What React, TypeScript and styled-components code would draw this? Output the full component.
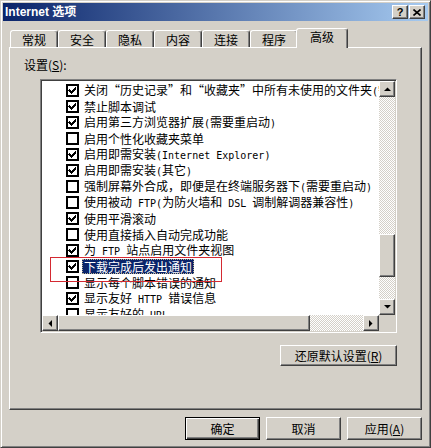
import React from 'react';
import styled, { createGlobalStyle, css } from 'styled-components';

const GlobalStyle = createGlobalStyle`
  html, body {
    margin: 0;
    padding: 0;
    background: #d4d0c8;
  }
  body {
    font-family: "Noto Sans CJK SC", "Liberation Sans", sans-serif;
    font-size: 12px;
    color: #000;
  }
  * {
    box-sizing: border-box;
  }
`;

const raised = css`
  background: #d4d0c8;
  border: 1px solid;
  border-color: #fff #404040 #404040 #fff;
  box-shadow: inset -1px -1px #808080;
`;

const Window = styled.div`
  width: 431px;
  height: 448px;
  background: #d4d0c8;
  border: 1px solid;
  border-color: #d4d0c8 #404040 #404040 #d4d0c8;
  box-shadow: inset 1px 1px #fff, inset -1px -1px #808080;
  padding: 2px;
  display: flex;
  flex-direction: column;
`;

const TitleBar = styled.div`
  height: 18px;
  display: flex;
  align-items: center;
  padding: 0 3px 0 2px;
  background: linear-gradient(to right, #0a246a, #a6caf0);
  color: #fff;
`;

const Title = styled.div`
  flex: 1;
  font: bold 12px "Liberation Sans", "Noto Sans CJK SC", sans-serif;
  line-height: 18px;
  white-space: nowrap;
`;

const CaptionButtons = styled.div`
  display: flex;
  gap: 1px;
`;

const CaptionButton = styled.div`
  ${raised}
  width: 16px;
  height: 14px;
  display: flex;
  align-items: center;
  justify-content: center;
  color: #000;
  font: bold 11px "Liberation Sans", sans-serif;
  line-height: 12px;
`;

const TabStrip = styled.div`
  display: flex;
  align-items: flex-end;
  height: 19px;
  margin: 7px 6px 0;
  padding-left: 1px;
`;

const Tab = styled.div<{ $active?: boolean }>`
  width: 48px;
  height: 17px;
  border: 1px solid;
  border-bottom: none;
  border-color: #fff #404040 transparent #fff;
  box-shadow: inset -1px 0 #808080;
  border-radius: 3px 3px 0 0;
  background: #d4d0c8;
  text-align: center;
  padding-top: 2px;
  line-height: 14px;
  white-space: nowrap;

  ${(p) =>
    p.$active &&
    css`
      width: 52px;
      height: 20px;
      margin: 0 -2px -1px;
      padding-top: 1px;
      position: relative;
      z-index: 1;
    `}
`;

const Panel = styled.div`
  height: 363px;
  margin: 0 6px;
  border: 1px solid;
  border-color: #fff #404040 #404040 #fff;
  box-shadow: inset -1px -1px #808080;
  padding: 9px 0 0 14px;
  display: flex;
  flex-direction: column;
`;

const FieldLabel = styled.div`
  line-height: 16px;
  height: 16px;
`;

const Section = styled.div`
  width: 357px;
  margin: 6px 0 0 16px;
  display: flex;
  flex-direction: column;
`;

const ListFrame = styled.div`
  height: 254px;
  border: 1px solid;
  border-color: #808080 #fff #fff #808080;
  box-shadow: inset 1px 1px #404040, inset -1px -1px #d4d0c8;
  padding: 1px;
  background: #fff;
  display: grid;
  grid-template-columns: 1fr 16px;
  grid-template-rows: 1fr 16px;
`;

const Viewport = styled.div`
  position: relative;
  overflow: hidden;
  padding-top: 1px;
`;

const Row = styled.div`
  height: 16px;
  display: flex;
  align-items: center;
  padding-left: 24px;
  white-space: nowrap;
`;

const ItemLabel = styled.span<{ $selected?: boolean }>`
  margin-left: 3px;
  padding: 0 1px;
  border: 1px solid transparent;
  line-height: 13px;
  font-feature-settings: "fwid" 1;
  ${(p) =>
    p.$selected &&
    css`
      background: #0a246a;
      color: #fff;
      border: 1px dotted #b8b090;
    `}
`;

const Latin = styled.span`
  font-family: "DejaVu Sans Mono", "Liberation Mono", monospace;
  font-size: 10px;
  font-feature-settings: normal;
  white-space: pre;
`;

const Annotation = styled.div`
  position: absolute;
  left: 8px;
  top: 176px;
  width: 172px;
  height: 25px;
  border: 1px solid #d42a32;
  pointer-events: none;
`;

const hatch = css`
  background: repeating-conic-gradient(#fff 0 25%, #d4d0c8 0 50%) 0 0 / 2px 2px;
`;

const VScroll = styled.div`
  display: flex;
  flex-direction: column;
`;

const HScroll = styled.div`
  display: flex;
`;

const Track = styled.div`
  flex: 1;
  display: flex;
  ${hatch}
`;

const VTrack = styled(Track)`
  flex-direction: column;
`;

const ScrollButton = styled.div`
  ${raised}
  width: 16px;
  height: 16px;
  flex: none;
  display: flex;
  align-items: center;
  justify-content: center;
`;

const VThumb = styled.div<{ $offset: number; $size: number }>`
  ${raised}
  margin-top: ${(p) => p.$offset}px;
  height: ${(p) => p.$size}px;
  width: 16px;
`;

const HThumb = styled.div<{ $offset: number; $size: number }>`
  ${raised}
  margin-left: ${(p) => p.$offset}px;
  width: ${(p) => p.$size}px;
  height: 16px;
`;

const Corner = styled.div`
  background: #d4d0c8;
`;

const ButtonLine = styled.div<{ $gap?: number }>`
  display: flex;
  justify-content: flex-end;
  gap: ${(p) => p.$gap ?? 0}px;
`;

const RestoreLine = styled(ButtonLine)`
  margin-top: 12px;
`;

const DialogButtons = styled(ButtonLine)`
  margin-top: 7px;
  padding-right: 6px;
`;

const PushButton = styled.div<{ $width: number; $height: number; $default?: boolean }>`
  ${raised}
  width: ${(p) => p.$width}px;
  height: ${(p) => p.$height}px;
  display: flex;
  align-items: center;
  justify-content: center;
  line-height: 14px;
  white-space: nowrap;
  ${(p) =>
    p.$default &&
    css`
      border: 1px solid #000;
      box-shadow: inset 1px 1px #fff, inset -1px -1px #404040, inset -2px -2px #808080;
    `}
`;

type Dir = 'up' | 'down' | 'left' | 'right';

const Arrow = ({ dir }: { dir: Dir }) => {
  const vertical = dir === 'up' || dir === 'down';
  const points = {
    up: '0,4 3.5,0.5 7,4',
    down: '0,0 7,0 3.5,3.5',
    left: '4,0 4,7 0.5,3.5',
    right: '0,0 0,7 3.5,3.5',
  }[dir];
  return (
    <svg width={vertical ? 7 : 4} height={vertical ? 4 : 7} viewBox={vertical ? '0 0 7 4' : '0 0 4 7'}>
      <polygon points={points} fill="#000" />
    </svg>
  );
};

const CheckBox = ({ checked }: { checked: boolean }) => (
  <svg width="13" height="13" viewBox="0 0 13 13" style={{ flex: 'none' }}>
    <rect x="1" y="1" width="11" height="11" fill="#fff" stroke="#000" strokeWidth="2" />
    {checked && (
      <path
        d="M3 5h1v1h1v1h1v-1h1v-1h1v-1h1v-1h1v3h-1v1h-1v1h-1v1h-1v1h-1v-1h-1v-1h-1v-1h-1z"
        fill="#000"
        shapeRendering="crispEdges"
      />
    )}
  </svg>
);

const settings = [
  { checked: true, text: '关闭“历史记录”和“收藏夹”中所有未使用的文件夹(需要重启动)' },
  { checked: true, text: '禁止脚本调试' },
  { checked: true, text: '启用第三方浏览器扩展(需要重启动)' },
  { checked: false, text: '启用个性化收藏夹菜单' },
  { checked: true, text: '启用即需安装(Internet Explorer)' },
  { checked: true, text: '启用即需安装(其它)' },
  { checked: false, text: '强制屏幕外合成，即便是在终端服务器下(需要重启动)' },
  { checked: false, text: '使用被动 FTP(为防火墙和 DSL 调制解调器兼容性)' },
  { checked: true, text: '使用平滑滚动' },
  { checked: false, text: '使用直接插入自动完成功能' },
  { checked: true, text: '为 FTP 站点启用文件夹视图' },
  { checked: true, text: '下载完成后发出通知', selected: true },
  { checked: false, text: '显示每个脚本错误的通知' },
  { checked: true, text: '显示友好 HTTP 错误信息' },
  { checked: false, text: '显示友好的 URL' },
];

const tabs = ['常规', '安全', '隐私', '内容', '连接', '程序', '高级'];

// half-width runs get a 6px-wide mono face, like SimSun
const renderText = (text: string) =>
  text
    .split(/([\x20-\x7e]+)/)
    .filter(Boolean)
    .map((part, i) => (/^[\x20-\x7e]+$/.test(part) ? <Latin key={i}>{part}</Latin> : part));

const App: React.FC = () => {
  return (
    <>
      <GlobalStyle />
      <Window lang="zh-CN">
        <TitleBar>
          <Title>Internet 选项</Title>
          <CaptionButtons>
            <CaptionButton>?</CaptionButton>
            <CaptionButton>
              <svg width="8" height="7" viewBox="0 0 8 7">
                <path d="M0.5 0.5 L7.5 6.5 M7.5 0.5 L0.5 6.5" stroke="#000" strokeWidth="1.6" />
              </svg>
            </CaptionButton>
          </CaptionButtons>
        </TitleBar>

        <TabStrip>
          {tabs.map((t) => (
            <Tab key={t} $active={t === '高级'}>
              {t}
            </Tab>
          ))}
        </TabStrip>

        <Panel>
          <FieldLabel>
            设置(<u>S</u>):
          </FieldLabel>
          <Section>
            <ListFrame>
              <Viewport>
                {settings.map((s, i) => (
                  <Row key={i}>
                    <CheckBox checked={s.checked} />
                    <ItemLabel $selected={s.selected}>{renderText(s.text)}</ItemLabel>
                  </Row>
                ))}
                <Annotation />
              </Viewport>
              <VScroll>
                <ScrollButton>
                  <Arrow dir="up" />
                </ScrollButton>
                <VTrack>
                  <VThumb $offset={137} $size={43} />
                </VTrack>
                <ScrollButton>
                  <Arrow dir="down" />
                </ScrollButton>
              </VScroll>
              <HScroll>
                <ScrollButton>
                  <Arrow dir="left" />
                </ScrollButton>
                <Track>
                  <HThumb $offset={0} $size={252} />
                </Track>
                <ScrollButton>
                  <Arrow dir="right" />
                </ScrollButton>
              </HScroll>
              <Corner />
            </ListFrame>
            <RestoreLine>
              <PushButton $width={117} $height={21}>
                还原默认设置(<u>R</u>)
              </PushButton>
            </RestoreLine>
          </Section>
        </Panel>

        <DialogButtons $gap={6}>
          <PushButton $width={75} $height={23} $default>
            确定
          </PushButton>
          <PushButton $width={75} $height={23}>
            取消
          </PushButton>
          <PushButton $width={75} $height={23}>
            应用(<u>A</u>)
          </PushButton>
        </DialogButtons>
      </Window>
    </>
  );
};

export default App;
